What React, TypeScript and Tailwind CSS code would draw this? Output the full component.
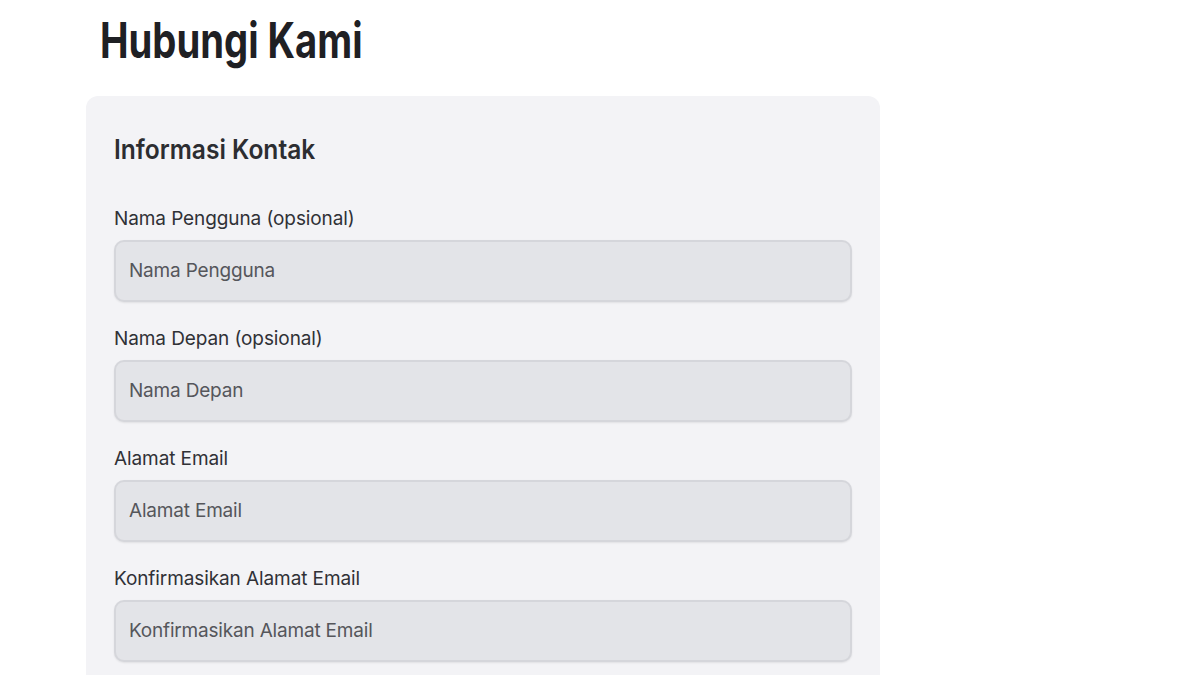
import React from "react";

const fields = [
  { label: "Nama Pengguna (opsional)", placeholder: "Nama Pengguna" },
  { label: "Nama Depan (opsional)", placeholder: "Nama Depan" },
  { label: "Alamat Email", placeholder: "Alamat Email" },
  { label: "Konfirmasikan Alamat Email", placeholder: "Konfirmasikan Alamat Email" },
];

export default function App() {
  return (
    <div
      className="w-[1200px] h-[675px] overflow-hidden bg-white"
      style={{ fontFamily: "Inter, 'Noto Sans', sans-serif" }}
    >
      <div className="pl-[86px] w-[880px]">
        <div className="pl-[14px] pt-[9px] h-[96px]">
          <h1 className="inline-block origin-left scale-x-[0.78] text-[49px] leading-[64px] font-bold text-[#1f2024] whitespace-nowrap">
            Hubungi Kami
          </h1>
        </div>
        <div className="bg-[#f3f3f6] rounded-t-[12px] px-[28px] pt-[34px] pb-[40px]">
          <h2 className="inline-block origin-left scale-x-[0.91] text-[27px] leading-[40px] font-semibold text-[#2c2d31] mb-[36px] whitespace-nowrap">
            Informasi Kontak
          </h2>
          <div className="flex flex-col gap-[24px]">
            {fields.map((f) => (
              <div key={f.label} className="flex flex-col">
                <label className="text-[19px] leading-[26px] text-[#303136] mb-[8px] tracking-[-0.005em]">{f.label}</label>
                <div className="h-[62px] rounded-[10px] bg-[#e3e4e8] border-2 border-[#d5d6db] shadow-[0_1px_2px_rgba(0,0,0,0.08)] flex items-center px-[13px] text-[19px] text-[#55565b] tracking-[-0.01em]">
                  {f.placeholder}
                </div>
              </div>
            ))}
          </div>
        </div>
      </div>
    </div>
  );
}
